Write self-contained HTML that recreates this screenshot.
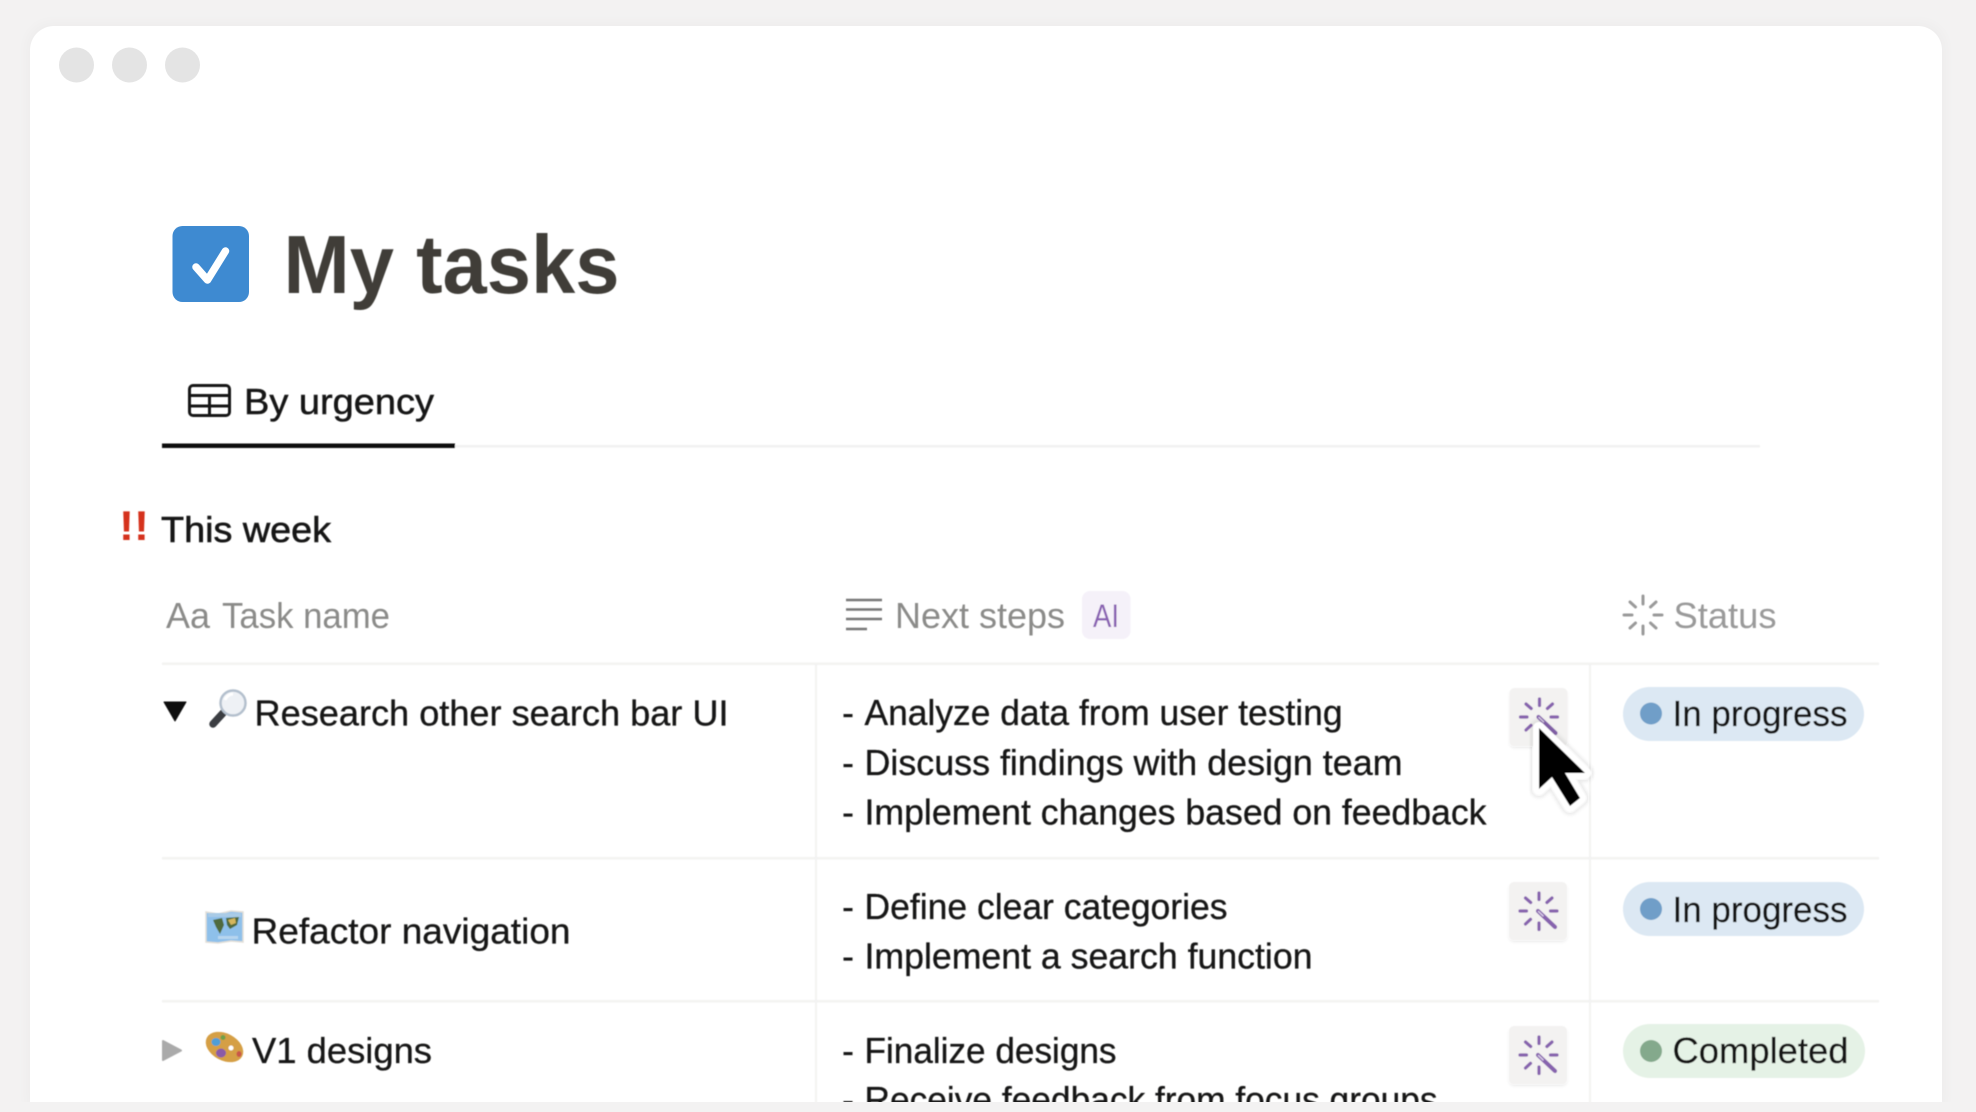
<!DOCTYPE html>
<html>
<head>
<meta charset="utf-8">
<title>My tasks</title>
<style>
html,body{margin:0;padding:0;background:#f3f2f2;width:1976px;height:1112px;overflow:hidden}
svg{display:block;position:absolute;left:0;top:0}
text{font-family:"Liberation Sans",sans-serif;font-size:36px;fill:#161615;stroke:#161615;stroke-width:.3}
text.g{fill:#8b8b89;stroke:none}
</style>
</head>
<body>
<svg width="1976" height="1112" viewBox="0 0 1976 1112" xmlns="http://www.w3.org/2000/svg">
<defs>
<filter id="sh" x="-5%" y="-5%" width="110%" height="110%"><feGaussianBlur stdDeviation="6"/></filter>
<filter id="b" x="-20%" y="-20%" width="140%" height="140%"><feGaussianBlur stdDeviation="1.5"/></filter>
<filter id="soft"><feGaussianBlur stdDeviation="0.45"/></filter>
<g id="btn">
<rect x="0" y="2" width="58" height="58" rx="5" fill="#000" opacity=".08" filter="url(#b)"/>
<rect x="0" y="0" width="58" height="58" rx="5" fill="#f3f2f1"/>
<g stroke="#8763ae" stroke-width="3.2" stroke-linecap="round" fill="none">
<path d="M30 11V17.500M30 41V47.500M11 29H17.500M41.500 29H48M16.500 16L21.700 20.500M43 16L37.900 20.500M16.500 42L21.500 37.300"/>
<path d="M29 29L46 45" stroke-width="4.200"/>
<path d="M29.500 29.500L34 33.800" stroke="#d9cfe6" stroke-width="1.500"/>
</g>
</g>
</defs>

<rect x="26" y="22" width="1920" height="1100" rx="26" fill="#000" opacity=".018" filter="url(#sh)"/>
<rect x="30" y="26" width="1912" height="1100" rx="24" fill="#fff"/>

<circle cx="76.500" cy="65" r="17.500" fill="#e4e4e4"/>
<circle cx="129.500" cy="65" r="17.500" fill="#e4e4e4"/>
<circle cx="182.500" cy="65" r="17.500" fill="#e4e4e4"/>

<rect x="172.500" y="226" width="76.500" height="76" rx="10" fill="#3e8ad1"/>
<path d="M196 267L207.500 280L225.500 251" fill="none" stroke="#fff" stroke-width="7.500" stroke-linecap="round" stroke-linejoin="round"/>

<g filter="url(#soft)">
<text x="283.500" y="293" font-weight="700" style="font-size:83px;fill:#3f3e39;stroke:none" textLength="336" lengthAdjust="spacingAndGlyphs">My tasks</text>

<g fill="none" stroke="#161615" stroke-width="3">
<rect x="189.500" y="385.500" width="40" height="30" rx="3.500"/>
<path d="M190 395.500H229M190 406H229M209.500 395.500V416"/>
</g>
<text x="244" y="414" textLength="190" lengthAdjust="spacingAndGlyphs" style="stroke-width:.5">By urgency</text>
<rect x="162" y="443.500" width="293" height="4.500" fill="#0c0c0c"/>
<rect x="455" y="445" width="1305" height="2.500" fill="#f2f2f1"/>

<text x="119" y="540" font-weight="700" style="font-size:42px;fill:#d5301f;stroke:none" textLength="30" lengthAdjust="spacingAndGlyphs">!!</text>
<text x="161" y="542" textLength="170" lengthAdjust="spacingAndGlyphs" style="stroke-width:.6">This week</text>

<text class="g" x="166" y="628" textLength="44" lengthAdjust="spacingAndGlyphs">Aa</text>
<text class="g" x="222" y="628" textLength="168" lengthAdjust="spacingAndGlyphs">Task name</text>

<path d="M846 600H882M846 609.500H882M846 619H882M846 629H867" stroke="#777" stroke-width="2.600" fill="none"/>
<text class="g" x="895" y="628" textLength="170" lengthAdjust="spacingAndGlyphs">Next steps</text>
<rect x="1082" y="591" width="48.500" height="48" rx="8" fill="#f5f1f9"/>
<text x="1093" y="627" style="font-size:32px;fill:#8a62b2;stroke:none" textLength="26" lengthAdjust="spacingAndGlyphs">AI</text>

<g stroke="#9a9a9a" stroke-width="3" stroke-linecap="round" fill="none">
<path d="M1643 596V604M1643 626V634M1624 615H1632M1654 615H1662M1630 602L1635.500 607M1656 602L1650.500 607M1630 628L1635.500 623M1656 628L1650.500 623"/>
</g>
<text class="g" x="1673.500" y="628" style="fill:#9a9a9a" textLength="103" lengthAdjust="spacingAndGlyphs">Status</text>

<rect x="162" y="662.500" width="1717" height="2.500" fill="#f3f3f2"/>
<rect x="162" y="857" width="1717" height="2.500" fill="#f3f3f2"/>
<rect x="162" y="1000" width="1717" height="2.500" fill="#f3f3f2"/>
<rect x="815" y="664" width="2" height="440" fill="#f3f3f2"/>
<rect x="1589" y="664" width="2" height="440" fill="#f3f3f2"/>

<path d="M164 702H186L175 721Z" fill="#0c0c0c" stroke="#0c0c0c" stroke-width="1" stroke-linejoin="round"/>
<path d="M163 1041L181 1050.500L163 1060Z" fill="#aaa" stroke="#aaa" stroke-width="2" stroke-linejoin="round"/>

<!-- magnifier -->
<path d="M224 712L213 724" stroke="#3a3d42" stroke-width="7.500" stroke-linecap="round"/>
<circle cx="233" cy="703" r="12.500" fill="#eef1f5" stroke="#b4c0cd" stroke-width="2.500"/>
<path d="M225 700a9 9 0 0 1 8-6" stroke="#fff" stroke-width="3" fill="none"/>

<text x="254.500" y="725.500" textLength="474" lengthAdjust="spacingAndGlyphs">Research other search bar UI</text>

<!-- map -->
<path d="M206 912L218 914L231 911L243 912V942L231 941L218 943L206 942Z" fill="#8ec0ea" stroke="#e2dfd8" stroke-width="1.500"/>
<path d="M208 913H241V917H208Z" fill="#a9cbe6"/>
<path d="M213 920L222 918L224 925L220 934L216 927ZM226 918L239 917L237 925L230 929L227 925Z" fill="#4f6a3c"/>
<path d="M228 920L235 918L236 923L231 925Z" fill="#d5b65b"/>
<path d="M218 936H238V939H218Z" fill="#b7d5ee"/>

<text x="251.500" y="943.500" textLength="319" lengthAdjust="spacingAndGlyphs">Refactor navigation</text>

<!-- palette -->
<ellipse cx="224.500" cy="1047" rx="20" ry="13.500" transform="rotate(28 224.500 1047)" fill="#d59f45"/>
<ellipse cx="216" cy="1042" rx="4.500" ry="4" fill="#4f9ed8"/>
<circle cx="223" cy="1037.500" r="2.500" fill="#6fa04a"/>
<ellipse cx="221" cy="1053" rx="5" ry="4.500" fill="#8a5aa8"/>
<circle cx="231" cy="1048" r="2.500" fill="#fff"/>
<ellipse cx="239" cy="1054" rx="2.500" ry="3" fill="#c9574a"/>

<text x="252" y="1063" textLength="180" lengthAdjust="spacingAndGlyphs">V1 designs</text>

<g>
<text x="842" y="725">-</text><text x="864.500" y="725" textLength="478" lengthAdjust="spacingAndGlyphs">Analyze data from user testing</text>
<text x="842" y="775">-</text><text x="864.500" y="775" textLength="538" lengthAdjust="spacingAndGlyphs">Discuss findings with design team</text>
<text x="842" y="824.500">-</text><text x="864.500" y="824.500" textLength="622" lengthAdjust="spacingAndGlyphs">Implement changes based on feedback</text>
<text x="842" y="919">-</text><text x="864.500" y="919" textLength="363" lengthAdjust="spacingAndGlyphs">Define clear categories</text>
<text x="842" y="968.500">-</text><text x="864.500" y="968.500" textLength="448" lengthAdjust="spacingAndGlyphs">Implement a search function</text>
<text x="842" y="1063">-</text><text x="864.500" y="1063" textLength="252" lengthAdjust="spacingAndGlyphs">Finalize designs</text>
<text x="842" y="1112">-</text><text x="864.500" y="1112" textLength="573" lengthAdjust="spacingAndGlyphs">Receive feedback from focus groups</text>
</g>

<use href="#btn" x="1509.500" y="688"/>
<use href="#btn" x="1509" y="882"/>
<use href="#btn" x="1509" y="1026"/>

<path d="M1539 728V789L1552 777L1570 806L1580 798L1565 773H1585Z" fill="#000" stroke="#000" stroke-opacity=".08" stroke-width="18" stroke-linejoin="round" filter="url(#b)"/>
<path d="M1539 728V789L1552 777L1570 806L1580 798L1565 773H1585Z" fill="#fff" stroke="#fff" stroke-width="12" stroke-linejoin="round"/>
<path d="M1539 728V789L1552 777L1570 806L1580 798L1565 773H1585Z" fill="#000"/>

<rect x="1623" y="687" width="241" height="54" rx="27" fill="#dce8f3"/>
<circle cx="1651" cy="713.500" r="11" fill="#6f9ec8"/>
<text x="1672.500" y="726" textLength="175" lengthAdjust="spacingAndGlyphs">In progress</text>

<rect x="1623" y="882" width="241" height="54" rx="27" fill="#dce8f3"/>
<circle cx="1651" cy="909" r="11" fill="#6f9ec8"/>
<text x="1672.500" y="922" textLength="175" lengthAdjust="spacingAndGlyphs">In progress</text>

<rect x="1623" y="1024" width="242" height="54" rx="27" fill="#e5f2e6"/>
<circle cx="1651" cy="1051" r="11" fill="#84a98c"/>
<text x="1672.500" y="1063" textLength="176" lengthAdjust="spacingAndGlyphs">Completed</text>
</g>

<rect x="0" y="1102" width="1976" height="10" fill="#f3f2f2"/>
</svg>
</body>
</html>
